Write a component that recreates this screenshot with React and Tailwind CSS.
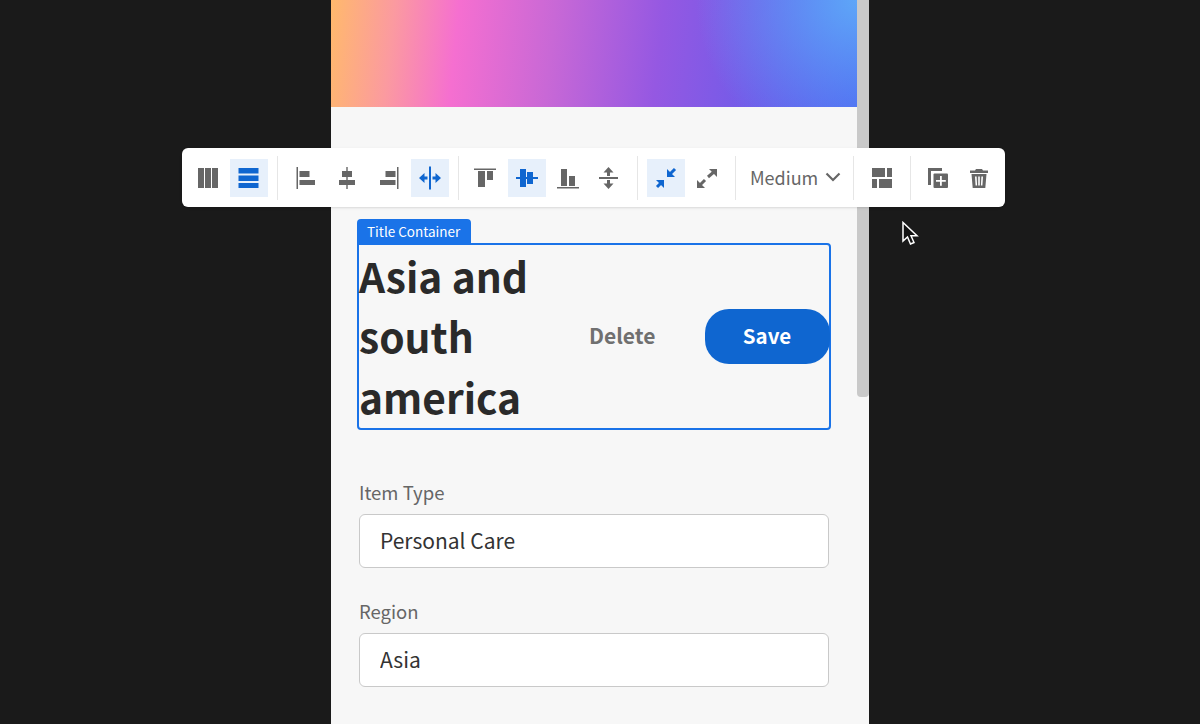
const GRAY = "#666666";
const BLUE = "#0f66d0";

function Arrow({ x1, y1, x2, y2, color }) {
  // line from tail to tip, with a right-angle head in the corner of the tip
  const dx = x2 > x1 ? -1 : 1;
  const dy = y2 > y1 ? -1 : 1;
  const s = 8;
  return (
    <g>
      <line x1={x1} y1={y1} x2={x2 + dx * 2} y2={y2 + dy * 2} stroke={color} strokeWidth="3" />
      <polygon points={`${x2},${y2} ${x2 + dx * s},${y2} ${x2},${y2 + dy * s}`} fill={color} />
    </g>
  );
}

const ICONS = {
  columns: (c) => <path fill={c} d="M10 9h6v20h-6zM17 9h6v20h-6zM24 9h6v20h-6z" />,
  rows: (c) => <path fill={c} d="M8.500 9h20v5.500h-20zM8.500 16.500h20v5.500h-20zM8.500 24h20v5h-20z" />,
  alignLeft: (c) => <path fill={c} d="M9.500 8H11v22H9.500zM12.500 12h10v6h-10zM12.500 21H28v5H12.500z" />,
  alignCenter: (c) => <path fill={c} d="M18.300 8h1.400v4H24v6h-4.300v3H27v5h-7.300v4h-1.400v-4H11v-5h7.300v-3H14v-6h4.300z" />,
  alignRight: (c) => <path fill={c} d="M27 8h1.500v22H27zM15.500 12h10v6h-10zM10 21h15.500v5H10z" />,
  spread: (c) => (
    <g fill={c}>
      <rect x="18" y="7.500" width="2" height="23" />
      <path d="M8 19l5.500-5v3.500h3v3h-3V24zM30 19l-5.500-5v3.500h-3v3h3V24z" />
    </g>
  ),
  alignTop: (c) => <path fill={c} d="M8 9.500h22V11H8zM12 12h7v16h-7zM21 12h6v9h-6z" />,
  alignMiddle: (c) => <path fill={c} d="M12 10h6v8h1v-5h6v5h5v2h-5v5h-6v-5h-1v8h-6v-8H8v-2h4z" />,
  alignBottom: (c) => <path fill={c} d="M12 10h6v17h-6zM20 17h6v10h-6zM8 28h22v1.500H8z" />,
  spreadV: (c) => (
    <g fill={c} transform="translate(-2 0)">
      <rect x="10" y="18" width="19" height="2" />
      <path d="M19.500 8l5 5.500h-3.500V17h-3v-3.500h-3.500zM19.500 30l5-5.500h-3.500V21h-3v3.500h-3.500z" />
    </g>
  ),
  collapse: (c) => (
    <g>
      <Arrow x1={10} y1={28} x2={17} y2={21} color={c} />
      <Arrow x1={28} y1={10} x2={20} y2={18} color={c} />
    </g>
  ),
  expand: (c) => (
    <g>
      <Arrow x1={17} y1={21} x2={9} y2={29} color={c} />
      <Arrow x1={20} y1={18} x2={29} y2={10} color={c} />
    </g>
  ),
  layout: (c) => <path fill={c} d="M10 9h13v9H10zM25 9h5v9h-5zM10 20h5v9h-5zM17 20h13v9H17z" />,
  duplicate: (c) => (
    <g>
      <path fill={c} d="M9 9h14v3H12v14H9z" />
      <rect x="14.500" y="14.500" width="14.500" height="14.500" rx="1" fill={c} />
      <path fill="#fff" d="M21 17h1.800v4h4v1.800h-4v4H21v-4h-4V21h4z" />
    </g>
  ),
  trash: (c) => (
    <path
      fill={c}
      fillRule="evenodd"
      transform="translate(-1 0)"
      d="M16 10h6l1 1.500h5v2.500H10v-2.500h5zM11.500 15h15l-1.200 14H12.700zM15 17.500l.6 9h1.500l-.5-9zM18.200 17.500v9h1.600v-9zM21.400 17.500l-.5 9h1.500l.6-9z"
    />
  ),
};

function ToolButton({ icon, active }) {
  const color = active ? BLUE : GRAY;
  return (
    <button className={`w-[38px] h-[38px] shrink-0 ${active ? "bg-[#e7f0fb]" : ""}`}>
      <svg width="38" height="38" viewBox="0 0 38 38">
        {ICONS[icon](color)}
      </svg>
    </button>
  );
}

function Group({ items }) {
  return (
    <div className="flex gap-[3.500px]">
      {items.map(([icon, active]) => (
        <ToolButton key={icon} icon={icon} active={active} />
      ))}
    </div>
  );
}

const Sep = ({ className = "mx-[9px]" }) => <div className={`w-px h-[44px] bg-[#e6e6e6] shrink-0 ${className}`} />;

function Toolbar() {
  return (
    <div className="absolute left-[182px] top-[148px] w-[823px] h-[59px] bg-white rounded-md flex items-center pl-[6px] shadow-sm">
      <Group items={[["columns"], ["rows", true]]} />
      <Sep />
      <Group items={[["alignLeft"], ["alignCenter"], ["alignRight"], ["spread", true]]} />
      <Sep className="ml-[9px] mr-[7px]" />
      <Group items={[["alignTop"], ["alignMiddle", true], ["alignBottom"], ["spreadV"]]} />
      <Sep className="ml-[8px] mr-[9px]" />
      <Group items={[["collapse", true], ["expand"]]} />
      <Sep />
      <div className="flex items-center w-[99px] pl-[5px] pb-[2px] text-[18px] leading-none text-[#666666]">
        <span>Medium</span>
        <svg className="ml-auto mr-[3px]" width="16" height="10" viewBox="0 0 16 10">
          <path d="M1.500 1.500L8 8l6.500-6.500" fill="none" stroke={GRAY} strokeWidth="2.200" />
        </svg>
      </div>
      <Sep className="ml-[9px] mr-[8px]" />
      <ToolButton icon="layout" />
      <Sep className="ml-[10px] mr-[8px]" />
      <Group items={[["duplicate"], ["trash"]]} />
    </div>
  );
}

function Field({ label, value }) {
  return (
    <div className="mb-[29px]">
      <label className="block text-[18.500px] leading-[28px] text-[#666666] mb-[8px]">{label}</label>
      <input
        readOnly
        value={value}
        className="block w-full h-[54px] rounded-md border border-[#c9c9c9] bg-white pl-[20px] pb-[3px] text-[21px] text-[#333333] outline-none"
      />
    </div>
  );
}

export default function App() {
  return (
    <div className="relative h-[724px] overflow-hidden bg-[#1a1a1a] flex justify-center font-['Noto_Sans_CJK_SC','Liberation_Sans',sans-serif]">
      <div className="w-[538px] h-full bg-[#f7f7f7] flex">
        <div className="w-[526px] shrink-0">
          <div className="h-[107px] bg-[radial-gradient(circle_at_100%_0%,#5ea6f8_0%,rgba(94,166,248,0)_30%),linear-gradient(96deg,#ffb96c_0%,#fb9aa0_12%,#f56fd0_24%,#c868d6_42%,#9558e2_62%,#6a5cea_84%,#4c5ff0_100%)]" />
          <div className="mt-[112px] ml-[26px] w-[474px]">
            <div className="w-[114px] h-[24px] bg-[#1a73e8] rounded-t text-white text-[13.500px] leading-[24px] pl-[10px]">
              Title Container
            </div>
            <div className="h-[187px] border-[2.500px] border-[#1a73e8] rounded-b rounded-tr flex items-center">
              <h1 className="w-[225px] text-[40.700px] leading-[60.500px] font-bold text-[#2a2a2a]">
                Asia and south america
              </h1>
              <button className="ml-[5px] w-[65px] pb-[3px] text-[21px] leading-none font-bold text-[#707070] whitespace-nowrap">Delete</button>
              <button className="ml-auto -mr-[0.500px] w-[125px] h-[55px] pb-[2px] rounded-[24px] bg-[#0f66d0] text-white text-[20.500px] font-bold">Save</button>
            </div>
          </div>
          <div className="mt-[48px] mx-[28px]">
            <Field label="Item Type" value="Personal Care" />
            <Field label="Region" value="Asia" />
            <Field label="Country" value="" />
          </div>
        </div>
        <div className="w-[12px] h-[397px] bg-[#c9c9c9] rounded-b-[4px]" />
      </div>
      <Toolbar />
      <svg className="absolute left-[901px] top-[221px]" width="18" height="26" viewBox="0 0 18 26">
        <path d="M2 1.500V20l4.500-4 3 7 3.500-1.500-3-6.800h6z" fill="#111" stroke="#fff" strokeWidth="1.500" />
      </svg>
    </div>
  );
}
